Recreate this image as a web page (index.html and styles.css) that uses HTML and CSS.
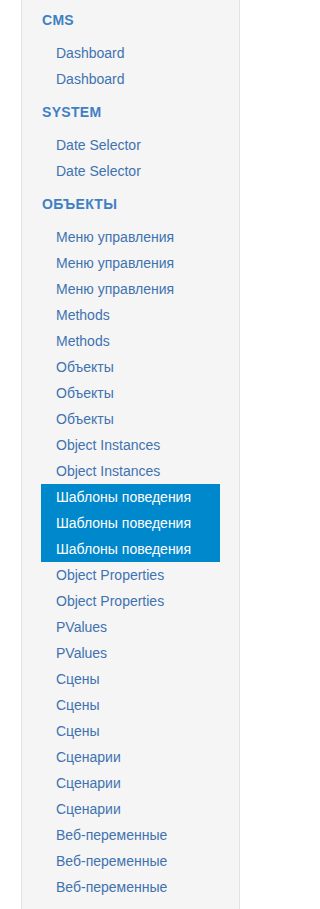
FILE: index.html
```html
<!DOCTYPE html>
<html>
<head>
<meta charset="utf-8">
<link rel="stylesheet" href="styles.css">
</head>
<body>
<div class="page">
  <nav class="sidebar">
    <ul class="nav">
      <li class="nav-header">CMS</li>
      <li><a href="#">Dashboard</a></li>
      <li><a href="#">Dashboard</a></li>
      <li class="nav-header">SYSTEM</li>
      <li><a href="#">Date Selector</a></li>
      <li><a href="#">Date Selector</a></li>
      <li class="nav-header">ОБЪЕКТЫ</li>
      <li><a href="#">Меню управления</a></li>
      <li><a href="#">Меню управления</a></li>
      <li><a href="#">Меню управления</a></li>
      <li><a href="#">Methods</a></li>
      <li><a href="#">Methods</a></li>
      <li><a href="#">Объекты</a></li>
      <li><a href="#">Объекты</a></li>
      <li><a href="#">Объекты</a></li>
      <li><a href="#">Object Instances</a></li>
      <li><a href="#">Object Instances</a></li>
      <li class="active"><a href="#">Шаблоны поведения</a></li>
      <li class="active"><a href="#">Шаблоны поведения</a></li>
      <li class="active"><a href="#">Шаблоны поведения</a></li>
      <li><a href="#">Object Properties</a></li>
      <li><a href="#">Object Properties</a></li>
      <li><a href="#">PValues</a></li>
      <li><a href="#">PValues</a></li>
      <li><a href="#">Сцены</a></li>
      <li><a href="#">Сцены</a></li>
      <li><a href="#">Сцены</a></li>
      <li><a href="#">Сценарии</a></li>
      <li><a href="#">Сценарии</a></li>
      <li><a href="#">Сценарии</a></li>
      <li><a href="#">Веб-переменные</a></li>
      <li><a href="#">Веб-переменные</a></li>
      <li><a href="#">Веб-переменные</a></li>
    </ul>
  </nav>
</div>
</body>
</html>
```

FILE: styles.css
```css
html, body {
  margin: 0;
  padding: 0;
  background: #ffffff;
  font-family: "Liberation Sans", Arial, sans-serif;
}

.page {
  padding-left: 21px;
  height: 909px;
  overflow: hidden;
}

.sidebar {
  width: 217px;
  min-height: 909px;
  background: #f5f5f5;
  border-left: 1px solid #e3e3e3;
  border-right: 1px solid #e3e3e3;
}

.nav {
  list-style: none;
  margin: 0 19px 0 19px;
  padding: 0;
}

.nav-header {
  padding: 10px 0 10px 1px;
  line-height: 20px;
  font-size: 14px;
  font-weight: bold;
  letter-spacing: 0.3px;
  color: #3f80c4;
}

.nav li a {
  display: block;
  padding: 0 0 0 15px;
  line-height: 26px;
  font-size: 14px;
  color: #3f72b0;
  text-decoration: none;
  white-space: nowrap;
}

.nav li.active a {
  background: #0088cc;
  color: #ffffff;
}
```
